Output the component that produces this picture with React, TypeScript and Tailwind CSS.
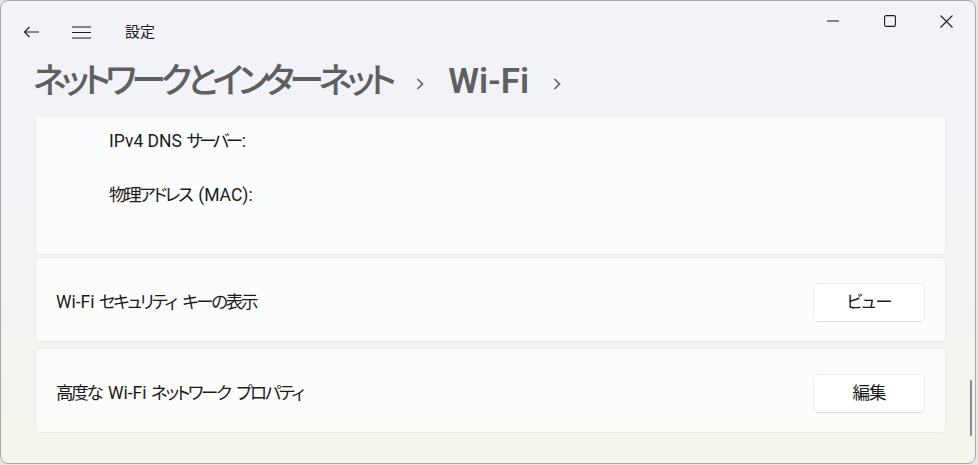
import React from "react";

const FONT = "font-['Segoe_UI',Roboto,'Noto_Sans_CJK_JP',sans-serif] [font-feature-settings:'palt']";

function J({ children, t = "tracking-[-2.3px] mr-[2.3px]" }: { children: React.ReactNode; t?: string }) {
  return <span className={t}>{children}</span>;
}

function Card({ label, button }: { label: React.ReactNode; button: string }) {
  return (
    <div className="flex h-[85px] items-center justify-between rounded-[5px] border border-black/[0.07] bg-white/70 pl-[20px] pr-[20px] pt-[5px]">
      <span className="whitespace-pre text-[17.5px] text-[#1b1b1b]">{label}</span>
      <button className="flex h-[39px] w-[112px] items-center justify-center rounded-[5px] border border-black/[0.07] border-b-black/[0.13] bg-white/80 text-[17.5px] tracking-[-1px] text-[#1b1b1b]">
        {button}
      </button>
    </div>
  );
}

export default function App() {
  return (
    <div className={`h-[465px] w-[978px] bg-[#e6e7e9] ${FONT}`}>
      <div className="relative flex h-[464px] w-[976px] flex-col overflow-hidden rounded-[8px] border border-[#a8a8a8] bg-gradient-to-b from-[#f1f3f9] via-[#f2f3f5] to-[#f4f4eb]">
        {/* title bar */}
        <div className="flex h-[62px] shrink-0 items-start justify-between">
          <div className="flex h-[62px] items-center pl-[22px]">
            <svg width="17" height="12" viewBox="0 0 17 12" className="text-[#1b1b1b]">
              <path d="M16 6H1.5M6.5 1L1.5 6l5 5" fill="none" stroke="currentColor" strokeWidth="1.1" />
            </svg>
            <svg width="19" height="13" viewBox="0 0 19 13" className="ml-[32px] text-[#1b1b1b]">
              <path d="M0 1h19M0 6.5h19M0 12h19" fill="none" stroke="currentColor" strokeWidth="1.1" />
            </svg>
            <span className="ml-[34px] text-[15px] leading-none text-[#1b1b1b]">設定</span>
          </div>
          <div className="flex h-[40px] items-center">
            <div className="flex h-[40px] w-[57px] items-center justify-center">
              <svg width="12" height="2" viewBox="0 0 12 2">
                <path d="M0 1h12" stroke="#1b1b1b" strokeWidth="1.1" />
              </svg>
            </div>
            <div className="flex h-[40px] w-[57px] items-center justify-center">
              <svg width="12" height="12" viewBox="0 0 12 12">
                <rect x="0.6" y="0.6" width="10.8" height="10.8" rx="1.5" fill="none" stroke="#1b1b1b" strokeWidth="1.1" />
              </svg>
            </div>
            <div className="flex h-[40px] w-[57px] items-center justify-center">
              <svg width="13" height="13" viewBox="0 0 13 13">
                <path d="M0.5 0.5l12 12M12.5 0.5l-12 12" stroke="#1b1b1b" strokeWidth="1.1" />
              </svg>
            </div>
          </div>
        </div>
        {/* heading */}
        <div className="flex h-[55px] shrink-0 items-center pb-[18px] pl-[32px] text-[35px] font-medium leading-none text-[#5f5f5f]">
          <span className="tracking-[-5.2px]">ネットワークとインターネット</span>
          <svg width="10" height="12" viewBox="0 0 10 12" className="ml-[24px] mt-[4px]">
            <path d="M2.5 1l5 5-5 5" fill="none" stroke="#5f5f5f" strokeWidth="1.6" />
          </svg>
          <span className="ml-[23px] font-semibold">Wi-Fi</span>
          <svg width="10" height="12" viewBox="0 0 10 12" className="ml-[23px] mt-[4px]">
            <path d="M2.5 1l5 5-5 5" fill="none" stroke="#5f5f5f" strokeWidth="1.6" />
          </svg>
        </div>
        {/* content */}
        <div className="relative flex-1 overflow-hidden">
          <div className="ml-[34px] mr-[29px] flex flex-col">
            <div className="flex h-[137px] flex-col rounded-b-[5px] border-x border-b border-black/[0.07] bg-white/70 pl-[73px] text-[17.5px] text-[#1b1b1b]">
              <div className="mt-[10px] h-[27px] whitespace-pre leading-[27px]">
                {"IPv4 DNS "}
                <J t="tracking-[-3.5px] mr-[2px]">サーバー</J>:
              </div>
              <div className="mt-[27px] h-[27px] whitespace-pre leading-[27px]">
                <J>物理アドレス</J>
                {" (MAC):"}
              </div>
            </div>
            <div className="mt-[2px]">
              <Card
                label={
                  <>
                    {"Wi-Fi "}
                    <J>セキュリティ</J>
                    {" "}
                    <J>キーの表示</J>
                  </>
                }
                button="ビュー"
              />
            </div>
            <div className="mt-[6px]">
              <Card
                label={
                  <>
                    <J>高度な</J>
                    {" Wi-Fi "}
                    <J>ネットワーク</J>
                    {" "}
                    <J>プロパティ</J>
                  </>
                }
                button="編集"
              />
            </div>
          </div>
          <div className="absolute right-[3px] top-[262px] h-[56px] w-[2px] rounded-full bg-[#8a8a8a]" />
        </div>
      </div>
    </div>
  );
}
